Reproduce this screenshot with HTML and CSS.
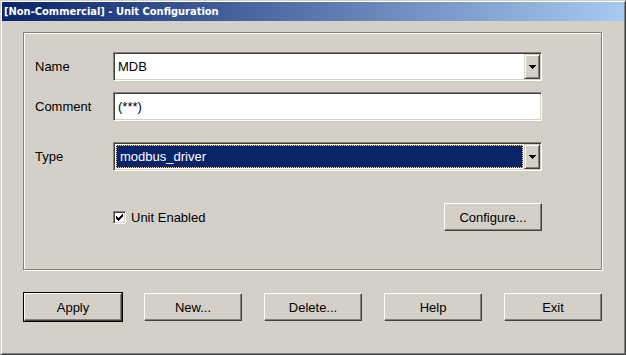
FILE: index.html
```html
<!DOCTYPE html>
<html>
<head>
<meta charset="utf-8">
<link rel="stylesheet" href="styles.css">
</head>
<body>
<div class="window">
  <div class="titlebar"><span class="title">[Non-Commercial] - Unit Configuration</span></div>
  <div class="client">
    <div class="group">
      <div class="row">
        <span class="label">Name</span>
        <div class="field sunken combo">
          <span class="value">MDB</span>
          <span class="drop"><svg width="7" height="4" viewBox="0 0 7 4" shape-rendering="crispEdges"><rect x="0" y="0" width="7" height="1"/><rect x="1" y="1" width="5" height="1"/><rect x="2" y="2" width="3" height="1"/><rect x="3" y="3" width="1" height="1"/></svg></span>
        </div>
      </div>
      <div class="row row-comment">
        <span class="label">Comment</span>
        <div class="field sunken edit"><span class="value">(***)</span></div>
      </div>
      <div class="row row-type">
        <span class="label">Type</span>
        <div class="field sunken combo">
          <span class="value selected">modbus_driver</span>
          <span class="drop"><svg width="7" height="4" viewBox="0 0 7 4" shape-rendering="crispEdges"><rect x="0" y="0" width="7" height="1"/><rect x="1" y="1" width="5" height="1"/><rect x="2" y="2" width="3" height="1"/><rect x="3" y="3" width="1" height="1"/></svg></span>
        </div>
      </div>
      <div class="row row-options">
        <span class="label"></span>
        <div class="options">
          <span class="check">
            <span class="checkbox"><svg width="7" height="7" viewBox="0 0 7 7" shape-rendering="crispEdges"><rect x="6" y="0" width="1" height="1"/><rect x="5" y="1" width="2" height="1"/><rect x="0" y="2" width="1" height="1"/><rect x="4" y="2" width="3" height="1"/><rect x="0" y="3" width="2" height="1"/><rect x="3" y="3" width="3" height="1"/><rect x="0" y="4" width="5" height="1"/><rect x="1" y="5" width="3" height="1"/><rect x="2" y="6" width="1" height="1"/></svg></span>
            <span class="check-text">Unit Enabled</span>
          </span>
          <button class="btn">Configure...</button>
        </div>
      </div>
    </div>
    <div class="buttons">
      <button class="btn default">Apply</button>
      <button class="btn">New...</button>
      <button class="btn">Delete...</button>
      <button class="btn">Help</button>
      <button class="btn">Exit</button>
    </div>
  </div>
</div>
</body>
</html>
```
FILE: styles.css
```css
* { box-sizing: border-box; }
html, body { margin: 0; padding: 0; }
body {
  width: 626px;
  height: 355px;
  overflow: hidden;
  background: #d4d0c8;
  font-family: "Liberation Sans", Arial, sans-serif;
  font-size: 13px;
  color: #000;
}
.window {
  width: 626px;
  height: 355px;
  border: 1px solid;
  border-color: #d4d0c8 #404040 #404040 #d4d0c8;
  box-shadow: inset 1px 1px 0 #fff, inset -1px -1px 0 #808080;
  padding: 1px;
  background: #d4d0c8;
}
.titlebar {
  height: 19px;
  background: linear-gradient(to right, #0a246a, #a6caf0);
  color: #fff;
  font-family: "DejaVu Sans Condensed", "DejaVu Sans", sans-serif;
  font-stretch: condensed;
  font-weight: bold;
  font-size: 11px;
  line-height: 19px;
  padding-left: 2px;
  white-space: nowrap;
}
.client { padding: 11px 0 0 21px; }
.group {
  width: 579px;
  height: 238px;
  border: 1px solid #808080;
  box-shadow: inset 1px 1px 0 #fff, 1px 1px 0 #fff;
  padding: 19px 0 0 11px;
}
.row { display: flex; align-items: center; height: 29px; }
.row-comment { margin-top: 11px; }
.row-type { margin-top: 21px; }
.row-options { margin-top: 32px; height: 28px; }
.label { width: 78px; flex: none; }
.field { width: 429px; height: 29px; flex: none; }
.sunken {
  border: 1px solid;
  border-color: #808080 #fff #fff #808080;
  box-shadow: inset 1px 1px 0 #404040, inset -1px -1px 0 #d4d0c8;
  background: #fff;
  padding: 1px;
}
.combo, .edit { display: flex; }
.value {
  flex: 1;
  display: flex;
  align-items: center;
  padding-left: 3px;
  white-space: nowrap;
}
.value.selected {
  margin: 1px;
  padding-left: 4px;
  background: #0a246a;
  color: #fff;
  outline: 1px dotted #f5db95;
  outline-offset: -1px;
}
.drop {
  width: 16px;
  flex: none;
  border: 1px solid;
  border-color: #d4d0c8 #404040 #404040 #d4d0c8;
  box-shadow: inset 1px 1px 0 #fff, inset -1px -1px 0 #808080;
  background: #d4d0c8;
  display: flex;
  align-items: center;
  justify-content: center;
}
.drop svg { display: block; margin-top: 1px; }
.options {
  width: 429px;
  display: flex;
  justify-content: space-between;
  align-items: center;
}
.check { display: flex; align-items: center; gap: 5px; }
.checkbox {
  width: 13px;
  height: 13px;
  border: 1px solid;
  border-color: #808080 #fff #fff #808080;
  box-shadow: inset 1px 1px 0 #404040, inset -1px -1px 0 #d4d0c8;
  background: #fff;
  display: flex;
  align-items: center;
  justify-content: center;
}
.checkbox svg { display: block; }
.btn {
  width: 98px;
  height: 28px;
  border: 1px solid;
  border-color: #fff #404040 #404040 #fff;
  box-shadow: inset -1px -1px 0 #808080, inset 1px 1px 0 #d4d0c8;
  background: #d4d0c8;
  font-family: inherit;
  font-size: 13px;
  color: #000;
  padding: 0;
  margin: 0;
}
.btn.default { outline: 1px solid #000; }
.buttons {
  display: flex;
  gap: 22px;
  margin-top: 23px;
  margin-left: 1px;
}
```
